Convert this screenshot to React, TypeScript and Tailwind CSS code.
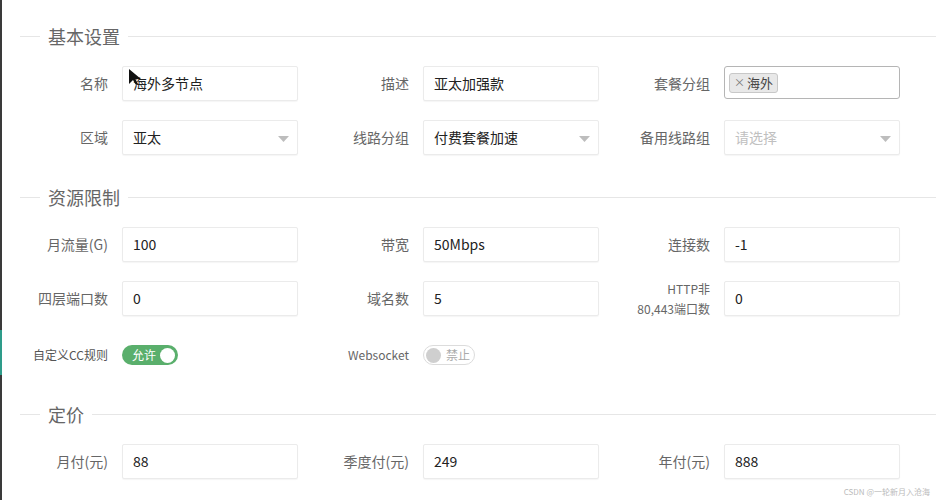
import React from "react";

const font = { fontFamily: '"Noto Sans CJK SC", "Noto Sans", sans-serif' };

function SectionTitle({ title }: { title: string }) {
  return (
    <div className="flex items-center h-[24px]">
      <div className="w-[20px] h-px bg-[#e6e6e6]" />
      <div className="px-[8px] text-[18px] leading-[24px] text-[#666]">{title}</div>
      <div className="flex-1 h-px bg-[#e6e6e6]" />
    </div>
  );
}

function Arrow() {
  return (
    <svg width="11" height="6" viewBox="0 0 11 6" className="absolute right-[8px] top-[15px]">
      <path d="M0 0 L11 0 L5.5 6 Z" fill="#bdbdbd" />
    </svg>
  );
}

function Field({
  label,
  value,
  select,
  placeholder,
  small,
}: {
  label: React.ReactNode;
  value?: string;
  select?: boolean;
  placeholder?: string;
  small?: boolean;
}) {
  return (
    <div className="flex items-center w-[278px] h-[35px]">
      <div
        className={
          "w-[88px] mr-[14px] text-right text-[#666] whitespace-nowrap " +
          (small ? "text-[12px] leading-[20px]" : "text-[14px]")
        }
      >
        {label}
      </div>
      <div className="relative w-[176px] h-[35px] border border-[#ebebeb] rounded-[2px] bg-white shadow-[0_1px_1px_rgba(0,0,0,0.04)] flex items-center pl-[10px]">
        {value !== undefined ? (
          <span className="text-[14px] text-[#222]">{value}</span>
        ) : (
          <span className="text-[14px] text-[#c0c0c0]">{placeholder}</span>
        )}
        {select && <Arrow />}
      </div>
    </div>
  );
}

export default function App() {
  return (
    <div className="relative w-[936px] h-[500px] bg-white overflow-hidden" style={font}>
      {/* left dark edge */}
      <div className="absolute left-0 top-0 w-[2px] h-[500px] bg-[#3a3a3a]" />
      <div className="absolute left-0 top-[330px] w-[2px] h-[45px] bg-[#2e9c8a]" />

      <div className="pl-[20px] pt-[24px]">
        <SectionTitle title="基本设置" />
        <div className="mt-[18px] flex gap-[23px] h-[35px]">
          <Field label="名称" value="海外多节点" />
          <Field label="描述" value="亚太加强款" />
          <div className="flex items-center w-[278px] h-[35px]">
            <div className="w-[88px] mr-[14px] text-right text-[14px] text-[#666]">套餐分组</div>
            <div className="w-[176px] h-[33px] border border-[#b5b5b5] rounded-[3px] bg-white flex items-center pl-[4px] self-start">
              <span className="flex items-center h-[20px] px-[4px] bg-[#e8e8e8] border border-[#c8c8c8] rounded-[3px] text-[13px] text-[#444]">
                <span className="text-[11px] text-[#777] mr-[2px]">×</span>海外
              </span>
            </div>
          </div>
        </div>
        <div className="mt-[19px] flex gap-[23px] h-[35px]">
          <Field label="区域" value="亚太" select />
          <Field label="线路分组" value="付费套餐加速" select />
          <Field label="备用线路组" placeholder="请选择" select />
        </div>

        <div className="mt-[30px]">
          <SectionTitle title="资源限制" />
        </div>
        <div className="mt-[18px] flex gap-[23px] h-[35px]">
          <Field label="月流量(G)" value="100" />
          <Field label="带宽" value="50Mbps" />
          <Field label="连接数" value="-1" />
        </div>
        <div className="mt-[19px] flex gap-[23px] h-[35px]">
          <Field label="四层端口数" value="0" />
          <Field label="域名数" value="5" />
          <Field
            label={
              <>
                HTTP非
                <br />
                80,443端口数
              </>
            }
            value="0"
            small
          />
        </div>
        <div className="mt-[29px] flex gap-[23px] h-[20px]">
          <div className="flex items-center w-[278px]">
            <div className="w-[88px] mr-[14px] text-right text-[12px] text-[#555] whitespace-nowrap">自定义CC规则</div>
            <div className="w-[56px] h-[20px] rounded-full bg-[#5aaf6c] flex items-center justify-between pl-[10px] pr-[3px]">
              <span className="text-[12px] text-white leading-none whitespace-nowrap">允许</span>
              <span className="w-[15px] h-[15px] rounded-full bg-white" />
            </div>
          </div>
          <div className="flex items-center w-[278px]">
            <div className="w-[88px] mr-[14px] text-right text-[12px] text-[#666]">Websocket</div>
            <div className="w-[52px] h-[20px] rounded-full bg-white border border-[#dcdcdc] flex items-center pl-[2px] gap-[5px]">
              <span className="w-[15px] h-[15px] rounded-full bg-[#cfcfcf] shrink-0" />
              <span className="text-[12px] text-[#aaa] leading-none whitespace-nowrap">禁止</span>
            </div>
          </div>
        </div>

        <div className="mt-[37px]">
          <SectionTitle title="定价" />
        </div>
        <div className="mt-[18px] flex gap-[23px] h-[35px]">
          <Field label="月付(元)" value="88" />
          <Field label="季度付(元)" value="249" />
          <Field label="年付(元)" value="888" />
        </div>
      </div>

      <div className="absolute right-[6px] bottom-[3px] text-[8px] text-[#bbb] leading-[10px]">
        CSDN @一轮新月入沧海
      </div>

      {/* mouse cursor */}
      <svg
        className="absolute left-[128px] top-[68px]"
        width="14"
        height="18"
        viewBox="0 0 14 18"
      >
        <path d="M1 1 L1 16 L5 12 L8 17 L10 16 L7.5 11 L13 11 Z" fill="#111" />
      </svg>
    </div>
  );
}
